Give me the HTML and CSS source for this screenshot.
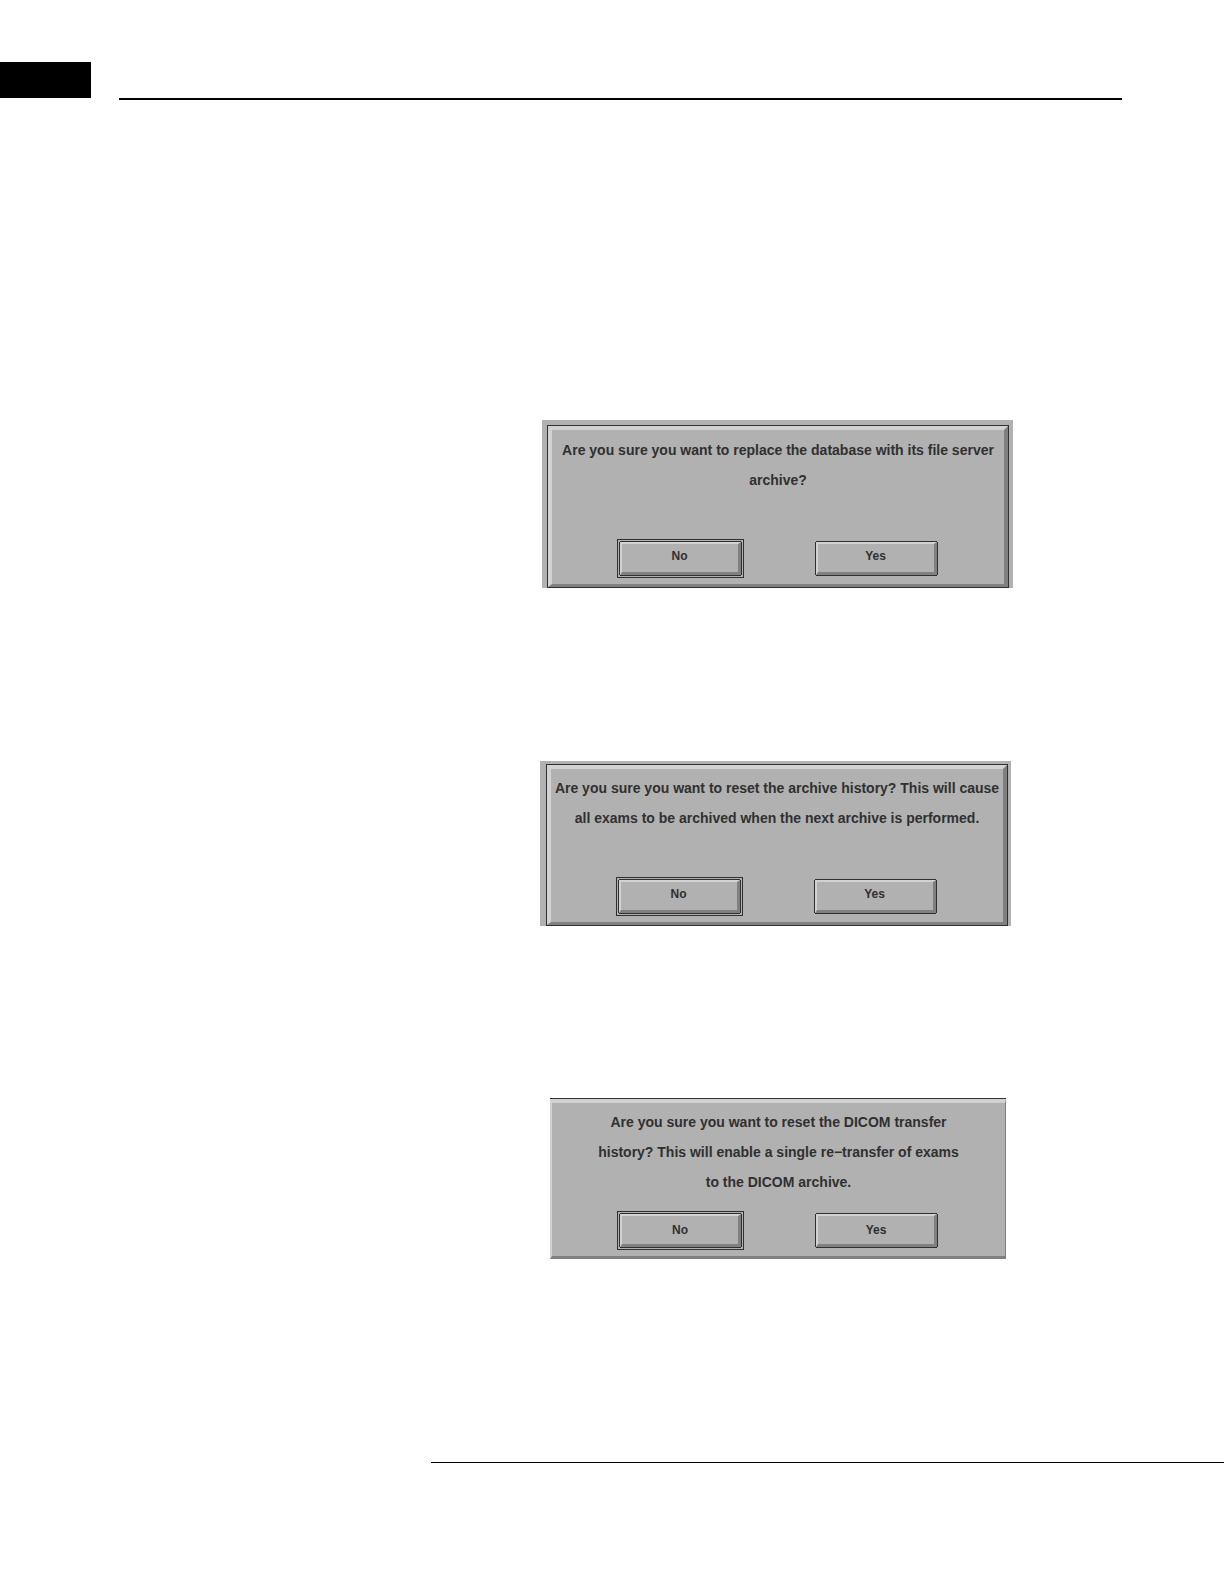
FILE: index.html
```
<!DOCTYPE html>
<html lang="en">
<head>
<meta charset="utf-8">
<title>Archive confirmations</title>
<link rel="stylesheet" href="styles.css">
</head>
<body>
<header class="page-head">
  <div class="tab"></div>
  <div class="head-rule"></div>
</header>
<main class="dialogs">
  <section class="mat" role="dialog" aria-labelledby="q1">
    <div class="panel">
      <p class="question" id="q1">Are you sure you want to replace the database with its file server<br>archive?</p>
      <div class="actions">
        <button type="button" class="btn btn-default">No</button>
        <button type="button" class="btn">Yes</button>
      </div>
    </div>
  </section>
  <section class="mat mat-offset" role="dialog" aria-labelledby="q2">
    <div class="panel">
      <p class="question" id="q2">Are you sure you want to reset the archive history? This will cause<br>all exams to be archived when the next archive is performed.</p>
      <div class="actions">
        <button type="button" class="btn btn-default">No</button>
        <button type="button" class="btn">Yes</button>
      </div>
    </div>
  </section>
  <section class="panel panel-bare" role="dialog" aria-labelledby="q3">
    <p class="question" id="q3">Are you sure you want to reset the DICOM transfer<br>history? This will enable a single re−transfer of exams<br>to the DICOM archive.</p>
    <div class="actions actions-near">
      <button type="button" class="btn btn-default">No</button>
      <button type="button" class="btn">Yes</button>
    </div>
  </section>
</main>
<footer class="foot-rule"></footer>
</body>
</html>
```
FILE: styles.css
```
* {
  box-sizing: border-box;
}

body {
  margin: 0;
  padding-bottom: 120px;
  background: #fff;
  color: #303030;
  font-family: "Liberation Sans", Arial, sans-serif;
}

.page-head {
  display: flex;
  gap: 28px;
  padding: 62px 102px 0 0;
}

.tab {
  width: 91px;
  height: 36px;
  background: #000;
}

.head-rule {
  flex: 1;
  margin-bottom: -2px;
  border-bottom: 2px solid #000;
}

.dialogs {
  display: flex;
  flex-direction: column;
  gap: 173px;
  padding: 322px 16px 0 542px;
}

.mat {
  display: flow-root;
  width: 100%;
  max-width: 471px;
  padding: 5px 4px 0 5px;
  background: #b1b1b1;
}

.mat-offset {
  margin-left: -2px;
  padding: 3px 3px 0 6px;
}

.panel {
  margin: 1px;
  padding: 5px 0 6px;
  border: 4px solid;
  border-bottom-width: 3px;
  border-color: #d2d2d2 #808080 #808080 #d2d2d2;
  outline: 1px solid #303030;
  background: #b1b1b1;
}

.mat-offset .panel {
  padding-top: 4px;
}

.panel-bare {
  width: 100%;
  max-width: 456px;
  margin: 0 0 0 8px;
  padding-top: 4px;
  border-width: 4px 1px 3px 2px;
  outline: 0;
  box-shadow: 0 -1px #303030;
}

.question {
  margin: 0;
  font-size: 14px;
  font-weight: 700;
  line-height: 30px;
  text-align: center;
  white-space: nowrap;
}

.actions {
  display: flex;
  justify-content: center;
  gap: 75px;
  padding: 47px 0 3px;
}

.actions-near {
  padding-top: 17px;
}

.btn {
  width: 121px;
  height: 33px;
  padding: 0 0 4px;
  border: 3px solid;
  border-width: 2px 3px 3px 2px;
  border-color: #d2d2d2 #808080 #808080 #d2d2d2;
  border-radius: 0;
  background: #b1b1b1;
  box-shadow: 0 -1px #303030, 0 1px #303030, -1px 0 #303030, 1px 0 #303030;
  color: #303030;
  font-family: inherit;
  font-size: 12px;
  font-weight: 700;
  line-height: 16px;
}

.actions-near .btn {
  padding-bottom: 0;
}

.btn-default {
  outline: 1px solid #303030;
  outline-offset: 2px;
}

.foot-rule {
  margin: 203px 0 0 431px;
  border-top: 1px solid #000;
}
```
